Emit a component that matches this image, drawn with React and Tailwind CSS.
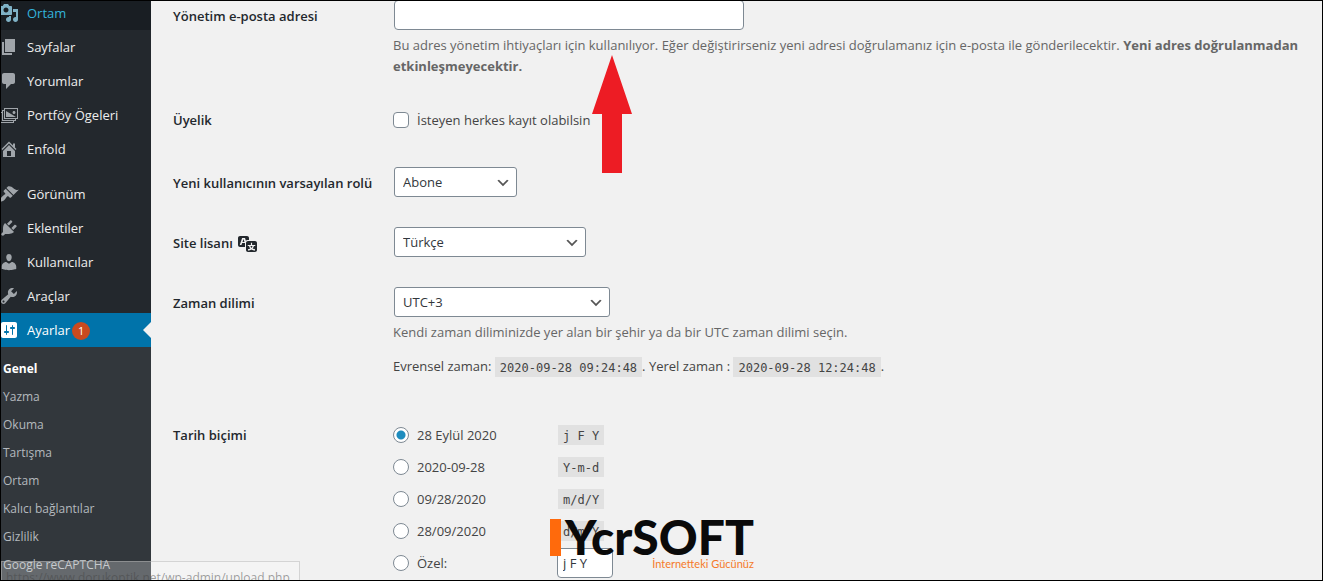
import React from "react";

const icons = {
  media:
    "M13 11V4c0-.55-.45-1-1-1h-1.67L9 1H5L3.67 3H2c-.55 0-1 .45-1 1v7c0 .55.45 1 1 1h10c.55 0 1-.45 1-1zM7 4.5c1.38 0 2.5 1.12 2.5 2.5S8.38 9.5 7 9.5 4.5 8.38 4.5 7 5.62 4.5 7 4.5zM14 6h5v10.5c0 1.38-1.12 2.5-2.5 2.5S14 17.88 14 16.5s1.12-2.5 2.5-2.5c.17 0 .34.02.5.05V9h-3V6zm-4 8.05V13h2v3.5c0 1.38-1.12 2.5-2.5 2.5S7 17.88 7 16.5 8.12 14 9.5 14c.17 0 .34.02.5.05z",
  page: "M6 15V2h10v13H6zm-1 1h8v2H3V5h2v11z",
  comments:
    "M5 2h9c1.1 0 2 .9 2 2v7c0 1.1-.9 2-2 2h-2l-5 5v-5H5c-1.1 0-2-.9-2-2V4c0-1.1.9-2 2-2z",
  images:
    "M5 3h14v11h-2v2h-2v2H1V7h2V5h2V3zm13 10V4H6v9h12zm-3-4c.83 0 1.5-.67 1.5-1.5S15.83 6 15 6s-1.5.67-1.5 1.5S14.17 9 15 9zM7 6l10 6H7V6zm7 11v-1H3V8H2v9h12zm2-2v-1H5V6H4v9h12z",
  home: "M16 8.5l1.53 1.53-1.06 1.06L10 4.6l-6.47 6.49-1.06-1.06L10 2.5l4 4v-2h2v4zm-6-2.46l6 5.99V18H4v-5.97zM12 17v-5H8v5h4z",
  appearance:
    "M14.48 11.06L7.41 3.99l1.5-1.5c.5-.56 2.3-.47 3.51.32 1.21.8 1.43 1.28 2.91 2.1 1.18.64 2.45 1.26 4.45.85zm-.71.71L6.7 4.7 4.93 6.47c-.39.39-.39 1.02 0 1.41l1.06 1.06c.39.39.39 1.03 0 1.42-.6.6-1.43 1.11-2.21 1.69-.35.26-.7.53-1.01.84C1.43 14.23.4 16.08 1.4 17.07c.99 1 2.84-.03 4.18-1.36.31-.31.58-.66.85-1.02.57-.78 1.08-1.61 1.69-2.21.39-.39 1.02-.39 1.41 0l1.06 1.06c.39.39 1.02.39 1.41 0z",
  plugins:
    "M13.11 4.36L9.87 7.6 8 5.73l3.24-3.24c.35-.34 1.05-.2 1.56.32.52.51.66 1.21.31 1.55zm-8 1.77l.91-1.12 9.01 9.01-1.19.84c-.71.71-2.63 1.16-3.82 1.16H6.14L4.9 17.26c-.59.59-1.54.59-2.12 0-.59-.58-.59-1.53 0-2.12l1.24-1.24v-3.88c0-1.13.4-3.19 1.09-3.89zm7.26 3.97l3.24-3.24c.34-.35 1.04-.21 1.55.31.52.51.66 1.21.31 1.55l-3.24 3.25z",
  users:
    "M10 9.25c-2.27 0-2.73-3.44-2.73-3.44C7 4.02 7.82 2 9.97 2c2.16 0 2.98 2.02 2.71 3.81 0 0-.41 3.44-2.68 3.44zm0 2.57L12.72 10c2.39 0 4.52 2.33 4.52 4.53v2.49s-3.65 1.13-7.24 1.13c-3.65 0-7.24-1.13-7.24-1.13v-2.49c0-2.25 1.94-4.48 4.47-4.48z",
  tools:
    "M16.68 9.77c-1.34 1.34-3.3 1.67-4.95.99l-5.41 6.52c-.99.99-2.59.99-3.58 0s-.99-2.59 0-3.57l6.52-5.42c-.68-1.65-.35-3.61.99-4.95 1.28-1.28 3.12-1.62 4.72-1.06l-2.89 2.89 2.82 2.82 2.86-2.87c.53 1.58.18 3.39-1.08 4.65zM3.81 16.21c.4.39 1.04.39 1.43 0 .4-.4.4-1.04 0-1.43-.39-.4-1.03-.4-1.43 0-.39.39-.39 1.03 0 1.43z",
  settings:
    "M18 16V4c0-1.1-.9-2-2-2H4c-1.1 0-2 .9-2 2v12c0 1.1.9 2 2 2h12c1.1 0 2-.9 2-2zM8 11h1c.55 0 1 .45 1 1s-.45 1-1 1H8v1.5c0 .28-.22.5-.5.5s-.5-.22-.5-.5V13H6c-.55 0-1-.45-1-1s.45-1 1-1h1V5.5c0-.28.22-.5.5-.5s.5.22.5.5V11zm5-2h-1c-.55 0-1-.45-1-1s.45-1 1-1h1V5.5c0-.28.22-.5.5-.5s.5.22.5.5V7h1c.55 0 1 .45 1 1s-.45 1-1 1h-1v5.5c0 .28-.22.5-.5.5s-.5-.22-.5-.5V9z",
  translation:
    "M11 7H9.49c-.63 0-1.25.3-1.59.7L7 5H4.13l-2.39 7h1.69l.74-2H7v4H2c-1.1 0-2-.9-2-2V5c0-1.1.9-2 2-2h7c1.1 0 2 .9 2 2v2zM6.51 9H4.49l1-2.93zM10 8h7c1.1 0 2 .9 2 2v7c0 1.1-.9 2-2 2h-7c-1.1 0-2-.9-2-2v-7c0-1.1.9-2 2-2zm7.25 5v-1.08h-3.17V9.75h-1.16v2.17H9.75V13h1.28c.11.85.56 1.85 1.28 2.62-.87.36-1.89.62-2.31.62-.01.02.22.97.2 1.46.84 0 2.21-.5 3.28-1.15 1.09.65 2.48 1.15 3.34 1.15-.02-.49.2-1.44.2-1.46-.43 0-1.49-.27-2.38-.63.7-.77 1.14-1.77 1.25-2.61h1.36zm-3.81 1.93c-.5-.46-.85-1.13-1.01-1.93h2.09c-.17.8-.51 1.47-1 1.93l-.04.03s-.03-.02-.04-.03z",
};

function Icon({ name, className }) {
  return (
    <svg viewBox="0 0 20 20" fill="currentColor" aria-hidden="true" className={"size-5 shrink-0 " + className}>
      <path d={icons[name]} />
    </svg>
  );
}

const menuTop = [
  ["page", "Sayfalar"],
  ["comments", "Yorumlar"],
  ["images", "Portföy Ögeleri"],
  ["home", "Enfold"],
];
const menuBottom = [
  ["appearance", "Görünüm"],
  ["plugins", "Eklentiler"],
  ["users", "Kullanıcılar"],
  ["tools", "Araçlar"],
];
const submenu = [
  "Yazma",
  "Okuma",
  "Tartışma",
  "Ortam",
  "Kalıcı bağlantılar",
  "Gizlilik",
  "Google reCAPTCHA",
];

function MenuItem({ icon, label }) {
  return (
    <li>
      <a href="#" className="-ml-0.5 flex h-[34px] items-center gap-2 text-[#eeeeee]">
        <Icon name={icon} className="text-[#a0a5aa]" />
        <span className="pt-0.5">{label}</span>
      </a>
    </li>
  );
}

function Sidebar() {
  return (
    <nav className="w-[150px] shrink-0 overflow-hidden bg-[#23282d] text-[13px] font-medium">
      <ul className="-mt-[5px]">
        <li className="bg-[#191e23]">
          <a href="#" className="-ml-0.5 flex h-[34px] items-center gap-2 text-[#33b3db]">
            <Icon name="media" className="text-[#7fb2c6]" />
            <span className="pt-0.5">Ortam</span>
          </a>
        </li>
        {menuTop.map(([icon, label]) => (
          <MenuItem key={label} icon={icon} label={label} />
        ))}
      </ul>
      <ul className="mt-[11px]">
        {menuBottom.map(([icon, label]) => (
          <MenuItem key={label} icon={icon} label={label} />
        ))}
        <li className="relative bg-[#0073aa]">
          <a href="#" className="-ml-0.5 flex h-[34px] items-center text-white">
            <Icon name="settings" className="mr-2" />
            <span className="pt-0.5">Ayarlar</span>
            <span className="mt-0.5 ml-0.5 flex size-[18px] items-center justify-center rounded-full bg-[#ca4a1f] text-[11px]">
              1
            </span>
          </a>
          <span className="absolute top-[9px] right-0 border-8 border-l-0 border-transparent border-r-[#f1f1f1]" />
        </li>
      </ul>
      <ul className="h-full bg-[#32373c] pt-2 pl-0.5 text-xs text-[#b4b9be]">
        <li className="font-bold text-white">
          <a href="#" className="flex h-7 items-center">Genel</a>
        </li>
        {submenu.map((label) => (
          <li key={label}>
            <a href="#" className="flex h-7 items-center">{label}</a>
          </li>
        ))}
      </ul>
    </nav>
  );
}

function Row({ label, htmlFor, labelClass = "pt-1.5", className = "", children }) {
  return (
    <div className={"grid grid-cols-[220px_1fr] items-start " + className}>
      <label htmlFor={htmlFor} className={"flex items-center gap-[5px] leading-5 font-semibold text-[#23282d] " + labelClass}>
        {label}
      </label>
      <div>{children}</div>
    </div>
  );
}

function Select({ id, value, className }) {
  return (
    <div className={"ml-px grid " + className}>
      <select
        id={id}
        className="col-start-1 row-start-1 h-[30px] w-full appearance-none rounded-[3px] border border-[#7e8993] bg-white pt-0.5 pr-6 pl-2 text-[#32373c]"
      >
        <option>{value}</option>
      </select>
      <svg
        viewBox="0 0 20 20"
        aria-hidden="true"
        className="pointer-events-none col-start-1 row-start-1 mt-px mr-1.5 size-4 self-center justify-self-end fill-[#555555]"
      >
        <path d="M5 6l5 5 5-5 2 1-7 7-7-7 2-1z" />
      </svg>
    </div>
  );
}

function Code({ children }) {
  return (
    <code className="inline-block h-5 bg-[#e1e1e1] px-[5px] font-['DejaVu_Sans_Mono',monospace] text-xs leading-[22px] text-[#444444]">
      {children}
    </code>
  );
}

const formats = [
  ["28 Eylül 2020", "j F Y"],
  ["2020-09-28", "Y-m-d"],
  ["09/28/2020", "m/d/Y"],
  ["28/09/2020", "d/m/Y"],
];

function Radio({ id, checked }) {
  return (
    <input
      id={id}
      type="radio"
      name="date_format"
      defaultChecked={checked}
      className="mr-2 size-4 shrink-0 appearance-none rounded-full border border-[#7e8993] bg-white checked:bg-[radial-gradient(circle,#1e8cbe_4px,#ffffff_5px)]"
    />
  );
}

function SettingsForm() {
  return (
    <form className="-mt-px min-w-0 flex-1 pr-2.5 pl-[22px] text-[13px]">
      <Row label="Yönetim e-posta adresi" htmlFor="email" className="pb-[33px]">
        <input
          id="email"
          type="email"
          className="ml-px block h-[30px] w-[350px] rounded-[4px] border border-[#7e8993] bg-white px-2"
        />
        <p className="mt-[5px] leading-[21px] text-[#666666]">
          Bu adres yönetim ihtiyaçları için kullanılıyor. Eğer değiştirirseniz yeni adresi doğrulamanız için e-posta ile
          gönderilecektir. <strong className="font-bold">Yeni adres doğrulanmadan etkinleşmeyecektir.</strong>
        </p>
      </Row>
      <Row label="Üyelik" htmlFor="register" labelClass="" className="pb-[37px]">
        <label className="flex h-5 items-center gap-2">
          <input
            id="register"
            type="checkbox"
            className="size-4 appearance-none rounded-[4px] border border-[#7e8993] bg-white"
          />
          <span className="pt-0.5">İsteyen herkes kayıt olabilsin</span>
        </label>
      </Row>
      <Row label="Yeni kullanıcının varsayılan rolü" htmlFor="role" className="pb-[30px]">
        <Select id="role" value="Abone" className="w-[123px]" />
      </Row>
      <Row
        label={
          <>
            Site lisanı
            <Icon name="translation" className="" />
          </>
        }
        htmlFor="lang"
        className="pb-[30px]"
      >
        <Select id="lang" value="Türkçe" className="w-48" />
      </Row>
      <Row label="Zaman dilimi" htmlFor="zone" className="pb-12">
        <Select id="zone" value="UTC+3" className="w-54" />
        <p className="mt-[5px] leading-[21px] text-[#666666]">
          Kendi zaman diliminizde yer alan bir şehir ya da bir UTC zaman dilimi seçin.
        </p>
        <p className="mt-3.5 flex h-5 items-center whitespace-pre">
          {"Evrensel zaman: "}
          <Code>2020-09-28 09:24:48</Code>
          {". Yerel zaman : "}
          <Code>2020-09-28 12:24:48</Code>.
        </p>
      </Row>
      <Row label="Tarih biçimi" htmlFor="format-0" labelClass="">
        <div className="flex flex-col gap-3">
          {formats.map(([label, code], i) => (
            <div key={code} className="flex h-5 items-center">
              <Radio id={"format-" + i} checked={i === 0} />
              <label htmlFor={"format-" + i} className="w-[141px] pt-0.5">
                {label}
              </label>
              <Code>{code}</Code>
            </div>
          ))}
          <div className="flex h-5 items-center">
            <Radio id="format-custom" />
            <label htmlFor="format-custom" className="w-[140px] pt-0.5">
              Özel:
            </label>
            <input
              type="text"
              aria-label="Özel tarih biçimi"
              defaultValue="j F Y"
              className="h-[30px] w-14 rounded-[4px] border border-[#7e8993] bg-white px-[5px] text-[#32373c]"
            />
          </div>
        </div>
      </Row>
    </form>
  );
}

export default function App() {
  return (
    <div className="relative flex min-h-screen overflow-hidden border border-black bg-[#f1f1f1] font-['Open_Sans','Noto_Sans',sans-serif] text-[#444444]">
      <Sidebar />
      <SettingsForm />

      <svg viewBox="0 0 40 118" aria-hidden="true" className="absolute top-[54px] left-[591px] w-10 fill-[#ed1c24]">
        <path d="M20 0L40 59H30V118H10V59H0z" />
      </svg>

      <div className="absolute top-[517px] left-[549px] flex items-start gap-1">
        <span className="mt-px h-[37px] w-[11px] bg-[#ff6a0c]" />
        <div className="flex flex-col items-end">
          <span className="font-['Lato',sans-serif] text-[48px] leading-[38px] font-black text-[#0a0a0a]">YcrSOFT</span>
          <span className="font-['Lato',sans-serif] text-[11px] leading-4 text-[#f57a2a]">İnternetteki Gücünüz</span>
        </div>
      </div>

      <div className="absolute bottom-0 left-0 h-[19px] w-[299px] overflow-hidden border border-b-0 border-[#b4b4b4]/50 bg-white/25 pt-1.5 pl-1 text-xs leading-5 whitespace-nowrap text-[#444444]/50">
        https://www.dorukoptik.net/wp-admin/upload.php
      </div>
    </div>
  );
}
